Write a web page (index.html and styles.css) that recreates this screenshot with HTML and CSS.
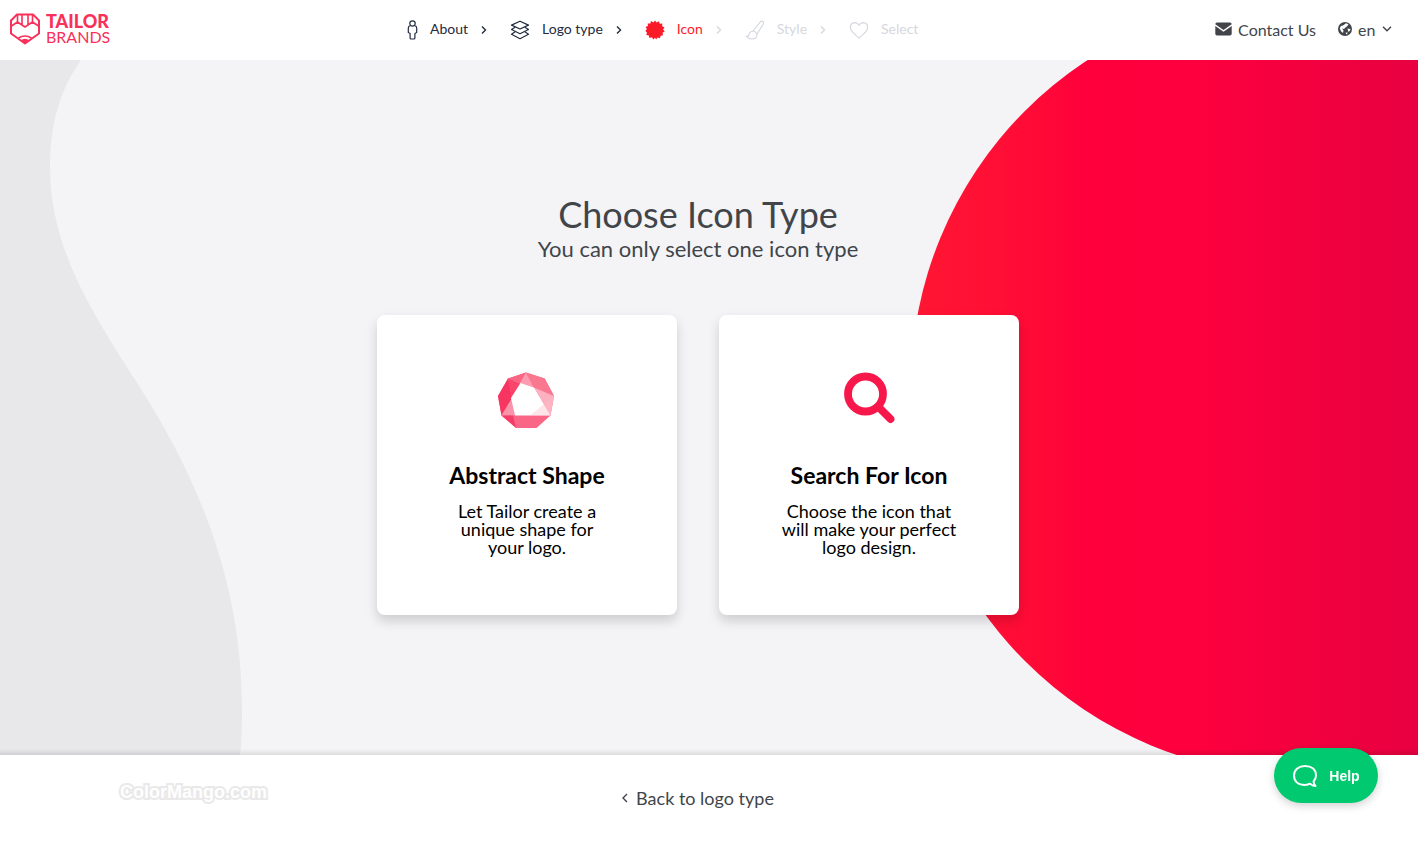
FILE: index.html
```html
<!DOCTYPE html>
<html lang="en">
<head>
    <meta charset="UTF-8">
    <meta name="viewport" content="width=device-width, initial-scale=1.0">
    <title>Choose Icon Type - Tailor Brands</title>
    <link rel="stylesheet" href="styles.css">
</head>
<body>
    <header class="header">
        <a href="#" class="logo">
            <svg width="30" height="32" viewBox="0 0 30 32" fill="none" stroke="#f9305a" stroke-width="2" stroke-linejoin="round">
                <path d="M7 1.500h16l6 6v13l-14 10-14-10v-13z"/>
                <path d="M1.500 13l6-4 7.500 5 7.500-5 6 4M7.500 9V2M22.500 9V2M12 2v9.500M18 2v9.500" stroke-width="1.600"/>
                <path d="M10.500 27.500q4.500-3.500 9 0L15 31z" fill="#f9305a" stroke="none"/>
                <path d="M8.500 25q6.500-4 13 0" stroke-width="1.500"/>
            </svg>
            <span class="logo-text"><b>TAILOR</b><span>BRANDS</span></span>
        </a>

        <nav class="steps">
            <a href="#" class="step">
                <svg width="11" height="20" viewBox="0 0 11 20" fill="none" stroke="currentColor" stroke-width="1.200">
                    <circle cx="5.500" cy="3.500" r="2.700"/>
                    <path d="M3.500 5.500Q1.300 6 1.300 8v4.500l1.800 1V18q0 1 1 1h2.800q1 0 1-1v-4.500l1.800-1V8q0-2-2.200-2.500"/>
                </svg>
                <span>About</span>
            </a>
            <svg class="arrow" width="6" height="10" viewBox="0 0 6 10"><path d="M1 1.500l3.500 3.500L1 8.500"/></svg>
            <a href="#" class="step">
                <svg width="20" height="20" viewBox="0 0 20 20" fill="none" stroke="currentColor" stroke-width="1.200" stroke-linejoin="round">
                    <path d="M10 1.200l8.500 3.900L10 9 1.500 5.100z"/>
                    <path d="M5.200 7.200l-3.700 2.300L10 13.700l8.500-4.200-3.700-2.300"/>
                    <path d="M5.200 11.800l-3.700 2.500L10 18.700l8.500-4.400-3.700-2.500"/>
                </svg>
                <span>Logo type</span>
            </a>
            <svg class="arrow" width="6" height="10" viewBox="0 0 6 10"><path d="M1 1.500l3.500 3.500L1 8.500"/></svg>
            <a href="#" class="step active">
                <svg width="20" height="20" viewBox="0 0 20 20" fill="currentColor">
                    <path d="M10 .5l1.600 2L14 1.200l.7 2.500 2.700-.1-.3 2.600 2.400 1-1.400 2.200 1.600 2-2.200 1.400.6 2.500-2.500.4-.6 2.500-2.500-.7L11.200 19.500 10 17.800l-1.700 1.700-1.400-2.200-2.500.6-.5-2.500-2.600-.5.7-2.500L.4 11l1.500-1.900L.5 6.900l2.400-.8-.2-2.600 2.600.1L6 1.100l2.400 1.300z"/>
                </svg>
                <span>Icon</span>
            </a>
            <svg class="arrow off" width="6" height="10" viewBox="0 0 6 10"><path d="M1 1.500l3.500 3.500L1 8.500"/></svg>
            <a href="#" class="step off">
                <svg width="20" height="20" viewBox="0 0 20 20" fill="none" stroke="currentColor" stroke-width="1.200" stroke-linejoin="round">
                    <path d="M8 11l7.200-9q1.200-1.300 2.600-.6 1.300 1 .5 2.600L12 14"/>
                    <path d="M8 11q2.700.2 4 3 .3 5-5 5-3.500.2-5.800-2.800 2.400.5 2.600-1.200Q4.800 11.300 8 11z"/>
                </svg>
                <span>Style</span>
            </a>
            <svg class="arrow off" width="6" height="10" viewBox="0 0 6 10"><path d="M1 1.500l3.500 3.500L1 8.500"/></svg>
            <a href="#" class="step off">
                <svg width="20" height="20" viewBox="0 0 20 20" fill="none" stroke="currentColor" stroke-width="1.200" stroke-linejoin="round">
                    <path d="M10 5.200Q8.500 2.700 5.800 2.700 1.300 3 1.300 7.500c0 4 5 7.200 8.700 10.500 3.700-3.300 8.700-6.500 8.700-10.500Q18.700 3 14.200 2.700 11.500 2.700 10 5.200z"/>
                </svg>
                <span>Select</span>
            </a>
        </nav>

        <div class="tools">
            <a href="#" class="contact">
                <svg width="17" height="14" viewBox="0 0 17 14" fill="#41454a">
                    <path d="M2 .5h13q1.700 0 1.700 1.700L8.500 8 .3 2.200Q.3.500 2 .5z"/>
                    <path d="M.3 4l8.200 5.800L16.700 4v7.800q0 1.700-1.700 1.700H2q-1.700 0-1.700-1.700z"/>
                </svg>
                Contact Us
            </a>
            <div class="lang">
                <svg width="14" height="14" viewBox="0 0 14 14">
                    <circle cx="7" cy="7" r="7" fill="#41454a"/>
                    <path d="M8 1.200l2.500 1-1.300 2L7.500 5.500 6 7 4 6.500l1.500 2L5 11 3 9.200 1.800 6.500l1-2.500L5 3.500z" fill="#fff"/>
                    <path d="M9.500 6.500l3 .5-.7 2-1.600.8zM7.500 10.500l2.500.2-1.500 1.800z" fill="#fff"/>
                </svg>
                <select class="lang-select" aria-label="Language">
                    <option>en</option>
                </select>
                <svg class="caret" width="10" height="6" viewBox="0 0 10 6"><path d="M1 .8l4 4 4-4"/></svg>
            </div>
        </div>
    </header>

    <main class="hero">
        <svg class="blob-left" viewBox="0 0 250 695" preserveAspectRatio="xMinYMid slice">
            <path d="M0 0H81C62 27 50 60 50 107C50 186 90 249 130 312C194 409 242 516 242 650Q242 680 240 695H0z" fill="#e8e8ea"/>
        </svg>
        <svg class="blob-right" viewBox="0 0 518 695" preserveAspectRatio="xMaxYMid slice">
            <defs>
                <linearGradient id="red" gradientUnits="userSpaceOnUse" x1="12" y1="0" x2="518" y2="0">
                    <stop offset="0" stop-color="#ff1732"/>
                    <stop offset=".25" stop-color="#ff0a37"/>
                    <stop offset=".34" stop-color="#ff003c"/>
                    <stop offset=".58" stop-color="#fd003e"/>
                    <stop offset="1" stop-color="#e80040"/>
                </linearGradient>
            </defs>
            <circle cx="400" cy="326" r="389" fill="url(#red)"/>
        </svg>

        <div class="content">
            <h1>Choose Icon Type</h1>
            <p class="subtitle">You can only select one icon type</p>
            <div class="cards">
                <button type="button" class="card">
                    <svg width="60" height="60" viewBox="0 0 60 60">
                        <path d="M29 2.500l18.700 6L57 26l-3.500 19.500L39.500 58H19L4.500 45.500 1 26 11 8.500z" fill="#fa6786"/>
                        <path d="M11 8.500L1 26l3.500 19.500L15 28z" fill="#f73560"/>
                        <path d="M11 8.500l4 19.500 8.500-15z" fill="#f9446b"/>
                        <path d="M29 2.500L11 8.500l12 5.500z" fill="#f96583"/>
                        <path d="M29 2.500l-6 10.500 14 4.500z" fill="#fd9cb0"/>
                        <path d="M29 2.500l18.700 6L57 26l-20-8.500z" fill="#fa7790"/>
                        <path d="M37 17.500L57 26l-3.500 19.500z" fill="#fdb0c0"/>
                        <path d="M15 28L4.500 45.500H18z" fill="#f995aa"/>
                        <path d="M4.500 45.500H16L19 58z" fill="#f53c66"/>
                        <path d="M23.500 13L37 17.500l16.500 28H18L14 28z" fill="#fff"/>
                        <path d="M57 26L33 45.500h20.500z" fill="#fdbdca" opacity=".4"/>
                    </svg>
                    <strong>Abstract Shape</strong>
                    <span>Let Tailor create a<br>unique shape for<br>your logo.</span>
                </button>
                <button type="button" class="card">
                    <svg width="60" height="60" viewBox="0 0 60 60" fill="none" stroke="#f8174a">
                        <circle cx="26.500" cy="24" r="17.500" stroke-width="7.800"/>
                        <path d="M39.500 37L51.500 49" stroke-width="7.800" stroke-linecap="round"/>
                    </svg>
                    <strong>Search For Icon</strong>
                    <span>Choose the icon that<br>will make your perfect<br>logo design.</span>
                </button>
            </div>
        </div>
    </main>

    <footer class="footer">
        <span class="watermark">ColorMango.com</span>
        <a href="#" class="back">
            <svg width="6" height="10" viewBox="0 0 6 10"><path d="M5 1L1 5l4 4"/></svg>
            Back to logo type
        </a>
    </footer>

    <button type="button" class="help">
        <svg width="26" height="24" viewBox="0 0 26 24" fill="none" stroke="#fff" stroke-width="2" stroke-linejoin="round">
            <path d="M21.500 17.500Q24 15 24 11.500C24 5 19 2 13 2S2 5.500 2 11.500 6.500 21 13 21q3 0 5-1.300 2 2.300 5.500 2.300-1.500-1.500-2-4.500z"/>
        </svg>
        Help
    </button>
</body>
</html>
```

FILE: styles.css
```css
* {
    box-sizing: border-box;
}
body {
    margin: 0;
    min-height: 100vh;
    display: flex;
    flex-direction: column;
    font-family: Lato, 'Liberation Sans', sans-serif;
    color: #41454a;
    background: #fff;
}
a {
    color: inherit;
    text-decoration: none;
}
button, select {
    font-family: inherit;
    border: none;
    cursor: pointer;
}

/* top bar */
.header {
    display: flex;
    justify-content: space-between;
    align-items: center;
    height: 60px;
    padding: 0 26px 2px 10px;
}
.logo {
    display: flex;
    align-items: center;
    gap: 6px;
    color: #f9305a;
}
.logo-text {
    display: flex;
    flex-direction: column;
    font-size: 16px;
    line-height: 16px;
}
.logo-text b {
    font-size: 18px;
    font-weight: 900;
}
.steps {
    display: flex;
    align-items: center;
    padding-top: 2px;
    color: #232b3e;
}
.step {
    display: flex;
    align-items: center;
    gap: 12px;
    font-size: 14px;
    line-height: 20px;
}
.step span {
    padding-bottom: 2px;
}
.step.active {
    color: #fb1b28;
}
.steps .off {
    color: #d5d8de;
}
.arrow {
    margin: 0 23px 0 13px;
}
.arrow path, .caret path, .back path {
    fill: none;
    stroke: currentColor;
    stroke-width: 1.4;
}
.tools {
    display: flex;
    align-items: center;
    gap: 22px;
    font-size: 16px;
}
.contact, .lang {
    display: flex;
    align-items: center;
    gap: 6px;
}
.lang-select {
    appearance: none;
    padding: 0;
    font-size: 16px;
    color: inherit;
    background: none;
}

/* middle part */
.hero {
    position: relative;
    flex: 1;
    display: flex;
    justify-content: center;
    padding: 132px 22px 140px 0;
    overflow: hidden;
    background: #f4f4f6;
}
.hero::after {
    content: "";
    position: absolute;
    left: 0;
    right: 0;
    bottom: 0;
    height: 6px;
    background: linear-gradient(rgba(0, 0, 0, 0), rgba(0, 0, 0, 0.1));
}
.blob-left, .blob-right {
    position: absolute;
    top: 0;
    height: 100%;
}
.blob-left {
    left: 0;
}
.blob-right {
    right: 0;
}
.content {
    position: relative;
    text-align: center;
}
h1 {
    margin: 0;
    font-size: 36px;
    line-height: 44px;
    font-weight: 400;
}
.subtitle {
    margin: 0 0 53px;
    font-size: 22px;
    line-height: 26px;
}
.cards {
    display: flex;
    flex-wrap: wrap;
    justify-content: center;
    gap: 42px;
}
.card {
    display: flex;
    flex-direction: column;
    align-items: center;
    width: 300px;
    height: 300px;
    padding: 55px 20px 0;
    color: #000;
    background: #fff;
    border-radius: 8px;
    box-shadow: 0 6px 12px rgba(0, 0, 0, 0.16);
}
.card strong {
    margin: 31px 0 13px;
    font-size: 23px;
    line-height: 28px;
}
.card span {
    font-size: 18px;
    line-height: 18px;
}

/* bottom bar */
.footer {
    position: relative;
    display: flex;
    justify-content: center;
    align-items: center;
    height: 88px;
    padding: 0 22px 2px 0;
}
.back {
    display: flex;
    align-items: center;
    gap: 8px;
    font-size: 18px;
}
.watermark {
    position: absolute;
    left: 120px;
    top: 25px;
    font: bold 18px/24px 'Liberation Sans', sans-serif;
    color: #fff;
    -webkit-text-stroke: 4px #e9e9e9;
    paint-order: stroke fill;
}
.help {
    position: fixed;
    right: 40px;
    bottom: 40px;
    display: flex;
    align-items: center;
    justify-content: center;
    gap: 11px;
    width: 104px;
    height: 55px;
    font: bold 14px 'Liberation Sans', sans-serif;
    color: #fff;
    background: #00c970;
    border-radius: 28px;
    box-shadow: 0 3px 8px rgba(0, 0, 0, 0.18);
}

@media screen and (max-width: 900px) {
    .steps {
        display: none;
    }
    .hero {
        padding: 60px 20px;
    }
    .footer {
        padding-right: 0;
    }
    .watermark {
        display: none;
    }
}
```
